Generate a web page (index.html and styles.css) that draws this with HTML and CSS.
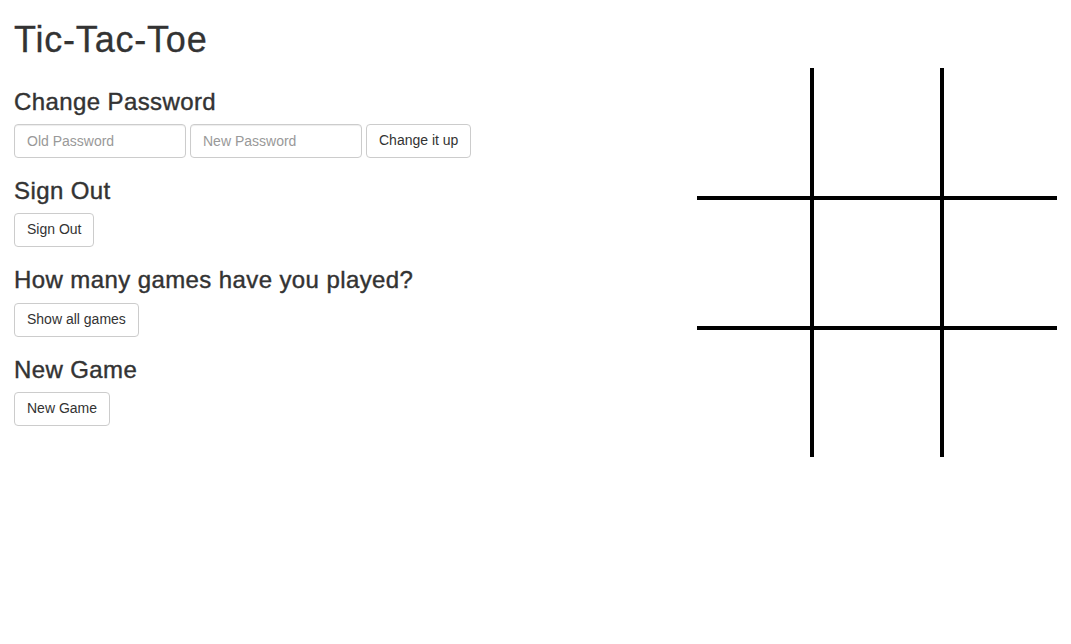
FILE: index.html
```html
<!DOCTYPE html>
<html lang="en">
<head>
<meta charset="utf-8">
<title>Tic-Tac-Toe</title>
<link rel="stylesheet" href="styles.css">
</head>
<body>
<div class="page">
  <div class="left">
    <h1 class="title">Tic-Tac-Toe</h1>
    <section class="section">
      <h3 class="heading">Change Password</h3>
      <form class="inline-form">
        <input class="field" type="password" placeholder="Old Password">
        <input class="field" type="password" placeholder="New Password">
        <button class="btn" type="button">Change it up</button>
      </form>
    </section>
    <section class="section">
      <h3 class="heading">Sign Out</h3>
      <button class="btn" type="button">Sign Out</button>
    </section>
    <section class="section">
      <h3 class="heading">How many games have you played?</h3>
      <button class="btn" type="button">Show all games</button>
    </section>
    <section class="section">
      <h3 class="heading">New Game</h3>
      <button class="btn" type="button">New Game</button>
    </section>
  </div>
  <div class="right">
    <div class="board">
      <div class="cell"></div><div class="cell"></div><div class="cell"></div>
      <div class="cell"></div><div class="cell"></div><div class="cell"></div>
      <div class="cell"></div><div class="cell"></div><div class="cell"></div>
    </div>
  </div>
</div>
</body>
</html>
```

FILE: styles.css
```css
* { box-sizing: border-box; }
html, body { margin: 0; padding: 0; background: #fff; }
body {
  font-family: "Liberation Sans", Arial, Helvetica, sans-serif;
  font-size: 14px;
  line-height: 1.42857;
  color: #333;
}
.page {
  display: flex;
  justify-content: space-between;
  padding: 0 14px;
}
.left {
  flex: 1;
  display: flex;
  flex-direction: column;
  align-items: flex-start;
}
.title {
  margin: 20px 0 9px;
  font-size: 36px;
  font-weight: 400;
  line-height: 1.1;
  letter-spacing: 0.8px;
  -webkit-text-stroke: 0.3px #333;
}
.heading {
  margin: 20px 0 9px;
  font-size: 24px;
  font-weight: 400;
  line-height: 1.1;
  letter-spacing: 0.4px;
  -webkit-text-stroke: 0.4px #333;
}
.inline-form {
  display: flex;
  gap: 4px;
  margin: 0;
}
.field {
  width: 172px;
  height: 34px;
  padding: 6px 12px;
  font-family: inherit;
  font-size: 14px;
  color: #555;
  border: 1px solid #ccc;
  border-radius: 4px;
  box-shadow: inset 0 1px 1px rgba(0,0,0,.075);
  background: #fff;
  margin: 0;
}
.field::placeholder { color: #999; }
.btn {
  display: inline-block;
  height: 34px;
  padding: 6px 12px;
  font-family: inherit;
  font-size: 14px;
  line-height: 1.42857;
  color: #333;
  background: #fff;
  border: 1px solid #ccc;
  border-radius: 4px;
  margin: 0;
  cursor: pointer;
}
.right { padding-top: 68px; }
.board {
  display: grid;
  grid-template-columns: 113px 126px 113px;
  grid-template-rows: 128px 126px 127px;
  gap: 4px;
  background: #000;
  width: 360px;
}
.cell { background: #fff; }
```
